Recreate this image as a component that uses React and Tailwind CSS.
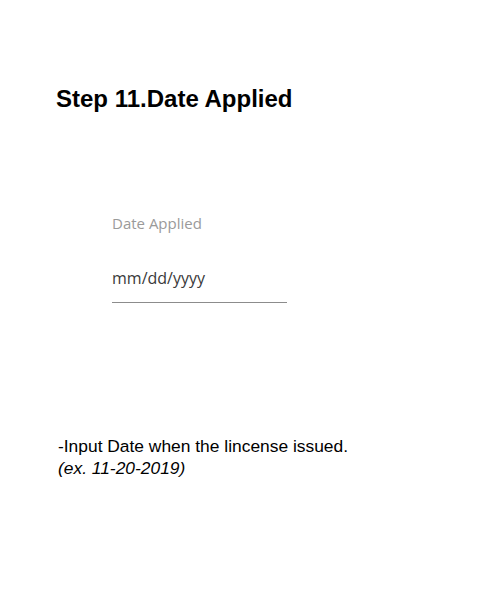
export default function App() {
  return (
    <div className="w-[500px] h-[600px] bg-white flex flex-col">
      {/* Step heading */}
      <h1 className="mt-[85px] ml-[56px] text-[24px] leading-[28px] font-bold text-black font-['Liberation_Sans',Arial,sans-serif]">
        Step 11.Date Applied
      </h1>

      {/* Date field */}
      <div className="mt-[100px] ml-[112px] flex flex-col font-['Open_Sans','Noto_Sans',sans-serif]">
        <label className="text-[15px] leading-[20px] text-[#9a9a9a]">Date Applied</label>
        <div className="mt-[33px] w-[175px] pb-[12px] border-b border-[#8c8c8c] text-[16px] leading-[24px] text-[#3a3a3a]">
          mm/dd/yyyy
        </div>
      </div>

      {/* Instructions */}
      <div className="mt-[132px] ml-[58px] text-[17.4px] leading-[22px] text-black font-['Liberation_Sans',Arial,sans-serif]">
        <p>-Input Date when the lincense issued.</p>
        <p className="italic">(ex. 11-20-2019)</p>
      </div>
    </div>
  );
}
